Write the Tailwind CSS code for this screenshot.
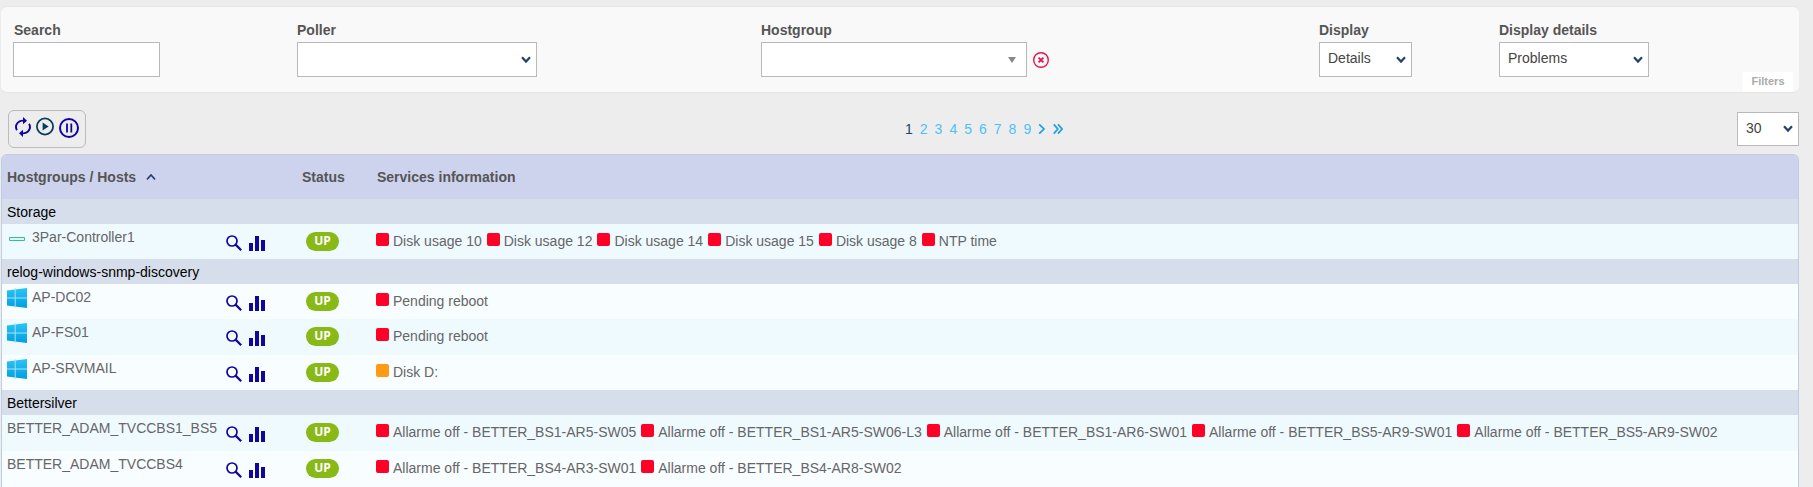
<!DOCTYPE html>
<html lang="en">
<head>
<meta charset="utf-8">
<title>Hostgroups / Hosts</title>
<script src="https://cdn.jsdelivr.net/npm/@tailwindcss/browser@4"></script>
</head>
<body class="min-h-screen overflow-hidden bg-[#ededed] pt-1.5 pr-3.5 pl-px font-['Liberation_Sans',Arial,sans-serif] text-sm text-[#666]">

<svg class="absolute size-0" aria-hidden="true">
  <symbol id="chev" viewBox="0 0 10 8"><path d="M1 1.2 5 5.6 9 1.2" fill="none" stroke="#24426f" stroke-width="2.2"/></symbol>
  <symbol id="lens" viewBox="0 0 16 16"><circle cx="6" cy="6" r="5" fill="none" stroke="#10069f" stroke-width="1.7"/><path d="M9.6 9.6 15.2 15.2" stroke="#10069f" stroke-width="2.2"/></symbol>
  <symbol id="bars" viewBox="0 0 16 16"><path d="M0 8h4v8H0zM6 1h4v15H6zM12 5h4v11h-4z" fill="#10069f"/></symbol>
  <linearGradient id="wg" x1="0" y1="0" x2="0" y2="1"><stop offset="0" stop-color="#2cc4f7"/><stop offset="1" stop-color="#009fe0"/></linearGradient>
  <symbol id="win" viewBox="0 0 20 20">
    <path d="M0 2.6 20 0v20L0 17.4z" fill="url(#wg)"/><path d="M8.2 0v20M0 10h20" stroke="#a5e2fa" stroke-width="1"/>
  </symbol>
</svg>

<form class="relative grid grid-cols-[284fr_464fr_558fr_180fr_300fr] rounded-md border-y border-[#e4e4e4] bg-[#f9f9f9] py-[15px] pl-3 text-[#555]">
  <div class="flex flex-col gap-1">
    <label for="search" class="pl-px font-bold leading-4">Search</label>
    <input id="search" type="text" class="h-[35px] w-[147px] border border-[#b9b9bd] bg-white px-2">
  </div>
  <div class="flex flex-col gap-1">
    <label for="poller" class="font-bold leading-4">Poller</label>
    <div class="relative w-60">
      <select id="poller" class="block h-[35px] w-full appearance-none border border-[#b9b9bd] bg-white px-2"><option></option></select>
      <svg class="pointer-events-none absolute top-3.5 right-1.5 h-2 w-2.5"><use href="#chev"/></svg>
    </div>
  </div>
  <div class="flex flex-col gap-1">
    <label for="hostgroup" class="font-bold leading-4">Hostgroup</label>
    <div class="flex items-center gap-1.5">
      <div class="relative w-[266px]">
        <select id="hostgroup" class="block h-[35px] w-full appearance-none border border-[#b9b9bd] bg-white px-2"><option></option></select>
        <svg class="pointer-events-none absolute top-[15px] right-[11px] h-1.5 w-2" viewBox="0 0 8 6"><path d="M0 0h8L4 6z" fill="#888"/></svg>
      </div>
      <button type="button" aria-label="Clear hostgroup">
        <svg class="block size-4" viewBox="0 0 16 16" fill="none" stroke="#e4144c"><circle cx="8" cy="8" r="7.3" stroke-width="1.4"/><path d="m5.6 5.6 4.8 4.8m0-4.8-4.8 4.8" stroke-width="1.8"/></svg>
      </button>
    </div>
  </div>
  <div class="flex flex-col gap-1">
    <label for="display" class="font-bold leading-4">Display</label>
    <div class="relative w-[93px]">
      <select id="display" class="block h-[35px] w-full appearance-none border border-[#b9b9bd] bg-white pb-1 pl-2 text-[#444]"><option>Details</option></select>
      <svg class="pointer-events-none absolute top-3.5 right-1.5 h-2 w-2.5"><use href="#chev"/></svg>
    </div>
  </div>
  <div class="flex flex-col gap-1">
    <label for="details" class="font-bold leading-4">Display details</label>
    <div class="relative w-[150px]">
      <select id="details" class="block h-[35px] w-full appearance-none border border-[#b9b9bd] bg-white pb-1 pl-2 text-[#444]"><option>Problems</option></select>
      <svg class="pointer-events-none absolute top-3.5 right-1.5 h-2 w-2.5"><use href="#chev"/></svg>
    </div>
  </div>
  <button type="button" class="absolute right-1.5 bottom-0 h-5 w-[50px] bg-white text-[11px] font-bold text-[#aaa]">Filters</button>
</form>

<div class="grid h-[61px] grid-cols-2">
  <div class="pt-[17px] pl-[7px]">
    <div class="flex h-[38px] w-[78px] items-start gap-[5px] rounded-md border border-[#bbb] pt-1.5 pl-1.5">
      <button type="button" aria-label="Refresh"><svg class="block h-5 w-4" viewBox="4 1 16 22" preserveAspectRatio="none"><path fill="#10069f" d="M12 6v3l4-4-4-4v3c-4.42 0-8 3.58-8 8 0 1.57.46 3.03 1.24 4.26L6.7 14.8c-.45-.83-.7-1.79-.7-2.8 0-3.31 2.69-6 6-6zm6.76 1.74L17.3 9.2c.44.84.7 1.79.7 2.8 0 3.31-2.69 6-6 6v-3l-4 4 4 4v-3c4.42 0 8-3.58 8-8 0-1.57-.46-3.03-1.24-4.26z"/></svg></button>
      <button type="button" aria-label="Play"><svg class="block h-5 w-[18px]" viewBox="0 0 18 20"><circle cx="9" cy="9.5" r="8.1" fill="none" stroke="#0a3f5c" stroke-width="1.8"/><path d="M6.6 5.5v8l6-4z" fill="#0a3f5c"/></svg></button>
      <button type="button" aria-label="Pause"><svg class="block h-[22px] w-5" viewBox="0 0 20 22" fill="none" stroke="#10069f"><circle cx="10" cy="11" r="9" stroke-width="2"/><path d="M8 6.6v9M12.3 6.6v9" stroke-width="1.8"/></svg></button>
    </div>
  </div>
  <div class="flex items-start justify-between pt-[19px] pl-[5px]">
    <nav aria-label="Pages" class="flex items-center gap-[7px] pt-2 leading-[18px] text-[#4fc0f8]">
      <span class="text-[#24426f]">1</span><a href="#">2</a><a href="#">3</a><a href="#">4</a><a href="#">5</a><a href="#">6</a><a href="#">7</a><a href="#">8</a><a href="#">9</a>
      <a href="#" aria-label="Next"><svg class="block h-3 w-2" viewBox="0 0 8 12"><path d="m1.2 1.4 4.8 4.6-4.8 4.6" fill="none" stroke="#1f9fdf" stroke-width="1.7"/></svg></a>
      <a href="#" aria-label="Last"><svg class="block h-3 w-2.5" viewBox="0 0 10 12"><path d="m.8 1.4 4 4.6-4 4.6M5 1.4l4 4.6-4 4.6" fill="none" stroke="#1f9fdf" stroke-width="1.7"/></svg></a>
    </nav>
    <div class="relative w-[62px]">
      <select aria-label="Rows per page" class="block h-[34px] w-full appearance-none border border-[#b9b9bd] bg-white pb-0.5 pl-2 text-[#444]"><option>30</option></select>
      <svg class="pointer-events-none absolute top-[13px] right-1.5 h-2 w-2.5"><use href="#chev"/></svg>
    </div>
  </div>
</div>

<div class="overflow-hidden rounded-t-md border border-b-0 border-[#bfcde0]">
<table class="w-full table-fixed border-collapse">
  <colgroup><col class="w-[218px]"><col class="w-[66px]"><col class="w-[80px]"><col></colgroup>
  <thead>
    <tr class="h-11 bg-[#cdd2ed] text-left text-[#555]">
      <th colspan="2" class="pl-[5px]" scope="col"><a href="#" class="flex items-center gap-2.5">Hostgroups / Hosts <svg class="h-2 w-2.5" viewBox="0 0 10 8"><path d="M1 6.4 5 2l4 4.4" fill="none" stroke="#24426f" stroke-width="1.6"/></svg></a></th>
      <th class="pl-4" scope="col">Status</th>
      <th class="pl-[11px]" scope="col">Services information</th>
    </tr>
  </thead>
  <tbody id="rows"></tbody>
</table>
</div>

<script>
const groups = [
  ["Storage", [
    ["3Par-Controller1", "box", "h-[35px] bg-[#effaff]", "bg-[#ff0027]", ["Disk usage 10", "Disk usage 12", "Disk usage 14", "Disk usage 15", "Disk usage 8", "NTP time"]]]],
  ["relog-windows-snmp-discovery", [
    ["AP-DC02", "win", "h-[35px] bg-[#f8fdff]", "bg-[#ff0027]", ["Pending reboot"]],
    ["AP-FS01", "win", "h-9 bg-[#effaff]", "bg-[#ff0027]", ["Pending reboot"]],
    ["AP-SRVMAIL", "win", "h-[35px] bg-[#f8fdff]", "bg-[#ff9a13]", ["Disk D:"]]]],
  ["Bettersilver", [
    ["BETTER_ADAM_TVCCBS1_BS5", "", "h-9 bg-[#effaff]", "bg-[#ff0027]", ["Allarme off - BETTER_BS1-AR5-SW05", "Allarme off - BETTER_BS1-AR5-SW06-L3", "Allarme off - BETTER_BS1-AR6-SW01", "Allarme off - BETTER_BS5-AR9-SW01", "Allarme off - BETTER_BS5-AR9-SW02"]],
    ["BETTER_ADAM_TVCCBS4", "", "h-9 bg-[#f8fdff]", "bg-[#ff0027]", ["Allarme off - BETTER_BS4-AR3-SW01", "Allarme off - BETTER_BS4-AR8-SW02"]]]]
];
const icons = {
  box: '<svg class="h-5 w-5 shrink-0" viewBox="0 0 20 20"><path d="M2.5 9.5h15v3h-15z" fill="#d9f7ee" stroke="#35bd9a"/></svg>',
  win: '<svg class="h-5 w-5 shrink-0"><use href="#win"/></svg>',
  "": ""
};
document.getElementById("rows").innerHTML = groups.map(([group, hosts]) =>
  `<tr class="h-[25px] bg-[#d5deea] text-black"><td colspan="4" class="pl-[5px] leading-5">${group}</td></tr>` +
  hosts.map(([name, icon, row, dot, services]) => `<tr class="${row}">
    <td class="pl-[5px] align-top"><a href="#" class="flex items-start gap-[5px] whitespace-nowrap pt-1 leading-[18px]">${icons[icon]}<span>${name}</span></a></td>
    <td class="pl-1.5 align-top"><div class="flex gap-[7px] pt-[11px]"><a href="#" aria-label="Details"><svg class="block size-4"><use href="#lens"/></svg></a><a href="#" aria-label="Graphs"><svg class="block size-4"><use href="#bars"/></svg></a></div></td>
    <td class="pl-5 align-top"><div class="pt-2"><span class="block h-[19px] w-[33px] rounded-full bg-[#88b917] text-center font-['Open_Sans',sans-serif] text-xs leading-[18px] font-bold text-white">UP</span></div></td>
    <td class="pl-[10px] align-top"><div class="flex gap-[5px] pt-2 leading-[18px] whitespace-nowrap">${services.map(s =>
      `<a href="#" class="flex gap-1"><span class="mt-px size-[13px] rounded-xs ${dot}"></span>${s}</a>`).join("")}</div></td>
  </tr>`).join("")).join("");
</script>
</body>
</html>
